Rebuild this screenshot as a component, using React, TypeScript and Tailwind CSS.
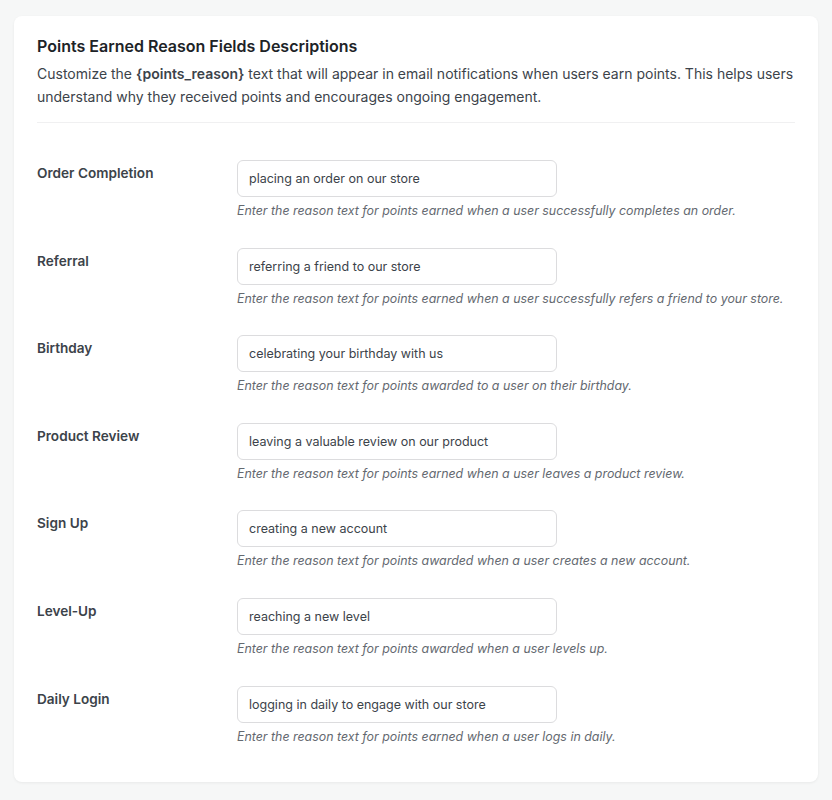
import React from 'react';

const reasons = [
  {
    id: 'order_completion',
    label: 'Order Completion',
    value: 'placing an order on our store',
    help: 'Enter the reason text for points earned when a user successfully completes an order.',
  },
  {
    id: 'referral',
    label: 'Referral',
    value: 'referring a friend to our store',
    help: 'Enter the reason text for points earned when a user successfully refers a friend to your store.',
  },
  {
    id: 'birthday',
    label: 'Birthday',
    value: 'celebrating your birthday with us',
    help: 'Enter the reason text for points awarded to a user on their birthday.',
  },
  {
    id: 'product_review',
    label: 'Product Review',
    value: 'leaving a valuable review on our product',
    help: 'Enter the reason text for points earned when a user leaves a product review.',
  },
  {
    id: 'sign_up',
    label: 'Sign Up',
    value: 'creating a new account',
    help: 'Enter the reason text for points awarded when a user creates a new account.',
  },
  {
    id: 'level_up',
    label: 'Level-Up',
    value: 'reaching a new level',
    help: 'Enter the reason text for points awarded when a user levels up.',
  },
  {
    id: 'daily_login',
    label: 'Daily Login',
    value: 'logging in daily to engage with our store',
    help: 'Enter the reason text for points earned when a user logs in daily.',
  },
];

function ReasonRow({ id, label, value, help }: (typeof reasons)[number]) {
  return (
    <div className="flex">
      <label htmlFor={id} className="w-[200px] shrink-0 pt-[3px] text-[13.6px] leading-[20px] font-semibold text-[#3c434a]">
        {label}
      </label>
      <div className="flex flex-col">
        <input
          id={id}
          type="text"
          defaultValue={value}
          className="h-[37px] w-[320px] rounded-[6px] border border-[#dcdcde] bg-white px-[11px] text-[12.5px] text-[#3c434a] outline-none"
        />
        <p className="mt-[4px] whitespace-nowrap text-[12.4px] leading-[20px] italic text-[#646970]">{help}</p>
      </div>
    </div>
  );
}

export default function App() {
  return (
    <div className="min-h-[800px] bg-[#f6f7f7] px-[14px] pt-[16px] pb-[18px] font-['Inter',sans-serif]">
      <div className="rounded-[8px] bg-white px-[23px] pt-[20px] pb-[35px] shadow-[0_1px_3px_rgba(0,0,0,0.06)]">
        <div className="border-b border-[#f0f0f1] pb-[14px]">
          <h2 className="text-[16px] leading-[21px] font-semibold text-[#1d2327]">Points Earned Reason Fields Descriptions</h2>
          <p className="mt-[5px] text-[14px] leading-[23px] text-[#3c434a]">
            Customize the <strong className="font-semibold">{'{points_reason}'}</strong> text that will appear in email
            notifications when users earn points. This helps users understand why they received points and encourages
            ongoing engagement.
          </p>
        </div>
        <div className="flex flex-col gap-[26.6px] pt-[37px]">
          {reasons.map((r) => (
            <ReasonRow key={r.id} {...r} />
          ))}
        </div>
      </div>
    </div>
  );
}
